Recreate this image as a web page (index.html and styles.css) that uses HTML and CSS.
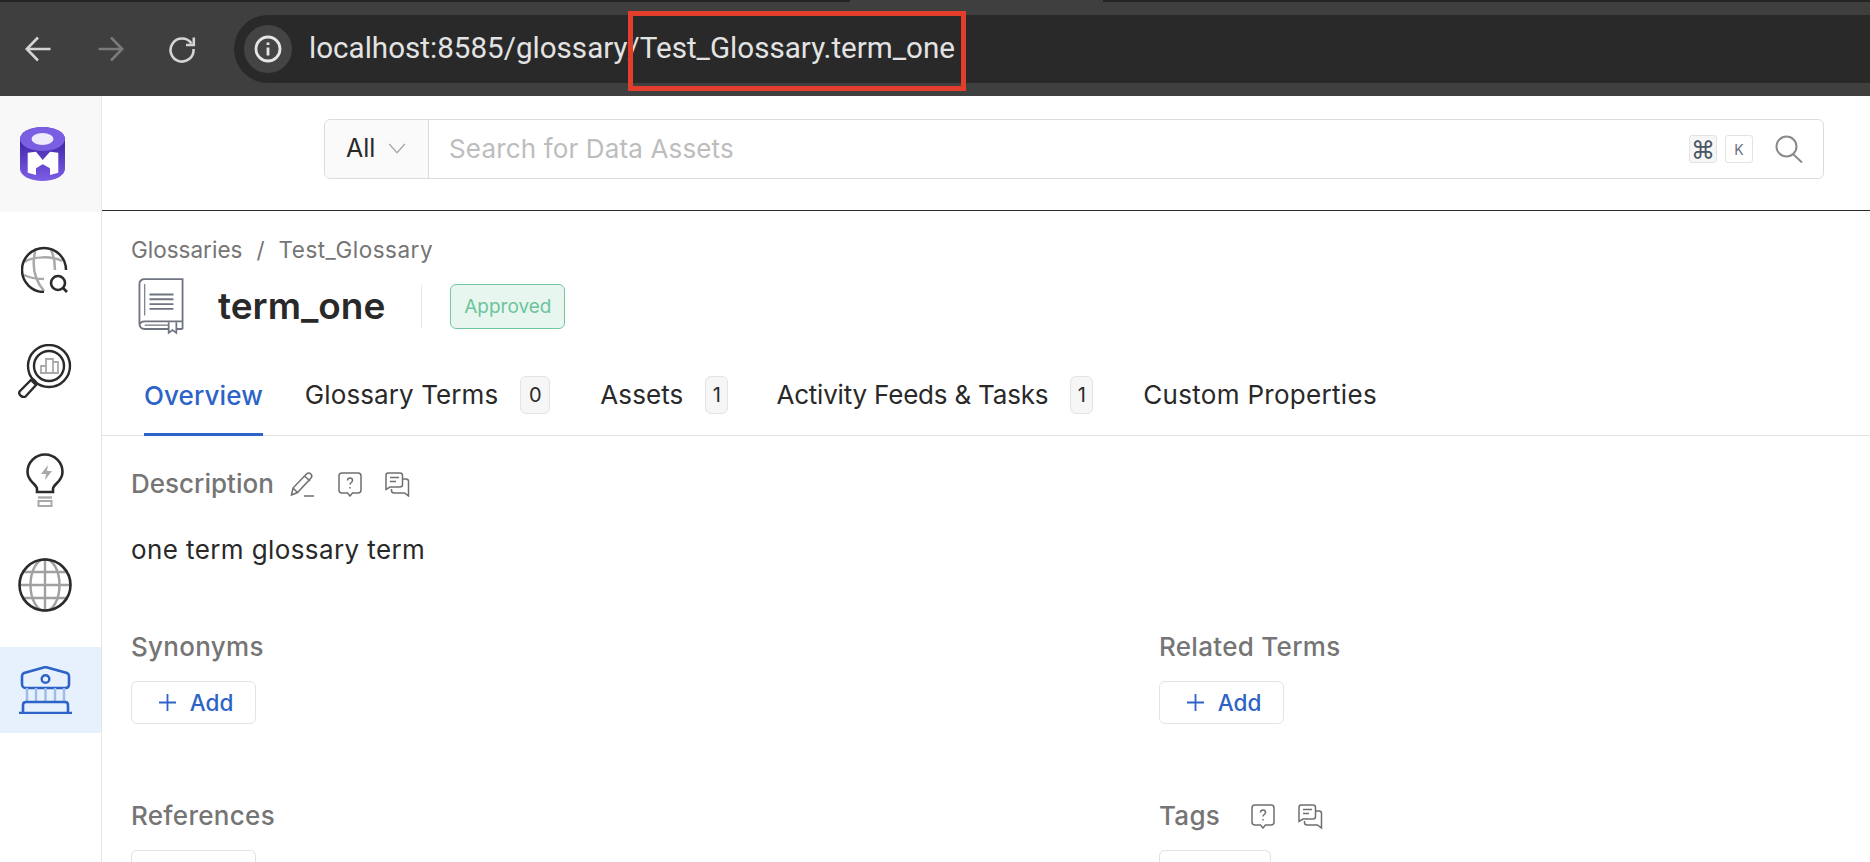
FILE: index.html
```html
<!DOCTYPE html>
<html lang="en">
<head>
<meta charset="utf-8">
<title>term_one</title>
<link rel="stylesheet" href="styles.css">
</head>
<body>
<header class="chrome">
  <div class="tabstrip"><span class="tab-a"></span><span class="tab-b"></span></div>
  <div class="toolbar">
    <svg class="nav n1" viewBox="0 0 30 30"><path d="M26.500 15H3.500M14 3.500L2.800 15 14 26.500"/></svg>
    <svg class="nav n2" viewBox="0 0 30 30"><path d="M3.500 15h23M16 3.500L27.200 15 16 26.500"/></svg>
    <svg class="nav n3" viewBox="0 0 30 30"><path d="M24.500 9.500A11.500 11.500 0 1 0 26.500 15"/><path d="M26.800 3.500V11H19"/></svg>
    <div class="omnibox">
      <span class="info"><svg viewBox="0 0 28 28"><circle cx="14" cy="14" r="12"/><path d="M14 12.500v8M14 7.500v2.500"/></svg></span>
      <span class="url">localhost:8585/glossary/Test_Glossary.term_one</span>
      <span class="highlight"></span>
    </div>
  </div>
</header>
<div class="app">
  <aside class="sidebar">
    <div class="logo">
      <svg viewBox="0 0 45 54" width="45" height="54">
        <defs><linearGradient id="logoBody" x1="0" y1="0" x2="0" y2="1"><stop offset="0.3" stop-color="#4429ad"/><stop offset="1" stop-color="#7d5fe6"/></linearGradient></defs>
        <path d="M0 12a22.500 12 0 0 1 45 0v30a22.500 12 0 0 1-45 0z" fill="url(#logoBody)"/>
        <ellipse cx="22.500" cy="12" rx="22.500" ry="12" fill="#7b5fe3"/>
        <ellipse cx="22.500" cy="12" rx="11" ry="6" fill="#efebfc"/>
        <path d="M7.700 25.700L16 24.700 22.700 33 30 24.700l8.300 1v20L30 48v-6.700l-7.300-4-6.700 4V48l-8.300-2.300z" fill="#fff"/>
      </svg>
    </div>
    <nav class="side-nav">
      <a class="side-item">
        <svg viewBox="0 0 48 48" width="48" height="48" fill="none">
          <path d="M15 3C11 17 12 33 23 46M30 5c3 6 4 13 4 20M3 17c10-6 28-6 38-1M3 30c6 3 14 4 20 4" stroke="#a9a9a9" stroke-width="2.500"/>
          <path d="M45 25A22 22 0 1 0 23 47" stroke="#2b2b2b" stroke-width="2.500"/>
          <circle cx="37" cy="38" r="7" stroke="#2b2b2b" stroke-width="2.600"/><path d="M42 43l4 4" stroke="#2b2b2b" stroke-width="2.600"/>
        </svg>
      </a>
      <a class="side-item lift">
        <svg viewBox="0 0 54 54" width="54" height="54" fill="none">
          <circle cx="31" cy="22" r="21" stroke="#2b2b2b" stroke-width="2.400"/><circle cx="31" cy="22" r="15" stroke="#2b2b2b" stroke-width="2.400"/>
          <path d="M23 29v-7h5v7M28 29V15h7v14M35 29v-11h5v11M22 29h19" stroke="#a9a9a9" stroke-width="1.800"/>
          <path d="M15 35l3 3M13 36l5 5-10 11c-3 3-9-2-6-5z" stroke="#2b2b2b" stroke-width="2.400"/>
        </svg>
      </a>
      <a class="side-item">
        <svg viewBox="0 0 38 54" width="38" height="54" fill="none">
          <path d="M11 39v-3c0-5-9.500-7-9.500-17a17.500 17.500 0 0 1 35 0c0 10-9.500 12-9.500 17v3z" stroke="#2b2b2b" stroke-width="2.600"/>
          <path d="M22 12l-7 9h5l-1 6 7-9h-5z" fill="#a9a9a9"/>
          <path d="M12 44.500h14" stroke="#a9a9a9" stroke-width="2.400"/>
          <rect x="12.500" y="48" width="13" height="5" stroke="#a9a9a9" stroke-width="2"/>
        </svg>
      </a>
      <a class="side-item">
        <svg viewBox="0 0 54 54" width="54" height="54" fill="none">
          <path d="M27 1v52M1 27h52M4 14h46M4 40h46" stroke="#a0a0a0" stroke-width="2.400"/>
          <ellipse cx="27" cy="27" rx="14.500" ry="26" stroke="#a0a0a0" stroke-width="2.400"/>
          <circle cx="27" cy="27" r="25.500" stroke="#2b2b2b" stroke-width="2.600"/>
        </svg>
      </a>
      <a class="side-item active">
        <svg viewBox="0 0 54 48" width="54" height="48" fill="none">
          <path d="M5 7L26.500 1 48 7c1 .5 2 1.500 2 3v8c0 2.500-1.500 4-3.500 4h-40C4.500 22 3 20.500 3 18v-8c0-1.500 1-2.500 2-3z" stroke="#2d63c7" stroke-width="2.600"/>
          <circle cx="26.500" cy="13" r="3.800" stroke="#2d63c7" stroke-width="2.400"/>
          <path d="M8 22v14M17 22v14M26.500 22v14M36 22v14M45 22v14" stroke="#9dbcec" stroke-width="2.400"/>
          <path d="M4 47v-8c0-2 1-3 3-3h39c2 0 3 1 3 3v8M0 47h53" stroke="#2d63c7" stroke-width="2.600"/>
        </svg>
      </a>
    </nav>
  </aside>
  <main class="content">
    <div class="topbar">
      <div class="search">
        <div class="scope"><span>All</span><svg viewBox="0 0 20 12" width="19" height="11"><path d="M1 1l8.500 9.500L18 1"/></svg></div>
        <div class="search-input">Search for Data Assets</div>
        <span class="key cmd">⌘</span>
        <span class="key">K</span>
        <svg class="magnifier" viewBox="0 0 28 28" width="28" height="28"><circle cx="11.500" cy="11.500" r="10"/><path d="M18.500 19.500l8.500 8"/></svg>
      </div>
    </div>
    <div class="page">
      <div class="crumbs"><span>Glossaries</span><span>/</span><span class="crumb-last">Test_Glossary</span></div>
      <div class="title-row">
        <svg class="book" viewBox="0 0 48 58" width="46" height="58" fill="none">
          <path d="M46.500 53V1H7C3.500 1 1.500 3 1.500 6v41c0 3.500 2 6 5.500 6h25M40 53h6.500M46.500 45H7c-3 0-5.500 2-5.500 4" stroke="#6f7480" stroke-width="1.900"/>
          <path d="M12 17h25M12 22h25M12 27h25M12 32h25" stroke="#6f7480" stroke-width="2"/>
          <path d="M7 6v33M7 49h25" stroke="#6f7480" stroke-width="1.200"/>
          <path d="M32 46v11l4-3 4 3V46" stroke="#6f7480" stroke-width="1.800"/>
        </svg>
        <h1>term_one</h1>
        <span class="rule"></span>
        <span class="status">Approved</span>
      </div>
      <div class="tabs">
        <a class="tab on">Overview</a>
        <a class="tab counted">Glossary Terms<b class="wide">0</b></a>
        <a class="tab counted">Assets<b>1</b></a>
        <a class="tab counted activity">Activity Feeds &amp; Tasks<b>1</b></a>
        <a class="tab custom">Custom Properties</a>
      </div>
      <section class="description">
        <div class="label-row">
          <h2 class="flush">Description</h2>
          <svg class="ico pencil" viewBox="0 0 26 26"><path d="M2.500 24l1.500-7L17.500 3c1.300-1.300 3-1.300 4.300 0s1.300 3 0 4.300L8.500 21.500zM15.500 5l5.500 5M4 17l4.500 4.500M15 25h10"/></svg>
          <svg class="ico help" viewBox="0 0 26 26"><path d="M5 2h16c2 0 3 1 3 3v14c0 2-1 3-3 3h-5.500L13 25l-2.500-3H5c-2 0-3-1-3-3V5c0-2 1-3 3-3zM10.500 9.500c0-3.300 5-3.300 5 0 0 2-2.500 2-2.500 4M13 16v1.500"/></svg>
          <svg class="ico comments" viewBox="0 0 26 26"><path d="M4 2h12c1.500 0 2.500 1 2.500 2.500v9c0 1.500-1 2.500-2.500 2.500H6l-4 2.500v-14C2 3 2.500 2 4 2zM6 6.500h9M6 10.500h6M18.500 8H22c1.500 0 2.500 1 2.500 2.500V25l-4-3H10c-1.500 0-2.500-1-2.500-2.500V18"/></svg>
        </div>
        <p>one term glossary term</p>
      </section>
      <div class="grid">
        <section class="field">
          <h2>Synonyms</h2>
          <button class="add"><svg viewBox="0 0 17 17" width="17" height="17"><path d="M8.500 0v17M0 8.500h17"/></svg>Add</button>
        </section>
        <section class="field">
          <h2>Related Terms</h2>
          <button class="add"><svg viewBox="0 0 17 17" width="17" height="17"><path d="M8.500 0v17M0 8.500h17"/></svg>Add</button>
        </section>
        <section class="field">
          <h2>References</h2>
          <button class="add stub"></button>
        </section>
        <section class="field">
          <div class="label-row">
            <h2>Tags</h2>
            <svg class="ico tag-help" viewBox="0 0 26 26"><path d="M5 2h16c2 0 3 1 3 3v14c0 2-1 3-3 3h-5.500L13 25l-2.500-3H5c-2 0-3-1-3-3V5c0-2 1-3 3-3zM10.500 9.500c0-3.300 5-3.300 5 0 0 2-2.500 2-2.500 4M13 16v1.500"/></svg>
            <svg class="ico comments" viewBox="0 0 26 26"><path d="M4 2h12c1.500 0 2.500 1 2.500 2.500v9c0 1.500-1 2.500-2.500 2.500H6l-4 2.500v-14C2 3 2.500 2 4 2zM6 6.500h9M6 10.500h6M18.500 8H22c1.500 0 2.500 1 2.500 2.500V25l-4-3H10c-1.500 0-2.500-1-2.500-2.500V18"/></svg>
          </div>
          <button class="add stub small"></button>
        </section>
      </div>
    </div>
  </main>
</div>
</body>
</html>
```
FILE: styles.css
```css
* { box-sizing: border-box; }
html, body { margin: 0; height: 862px; overflow: hidden; background: #fff; }
body { font-family: "Inter", "Noto Sans", sans-serif; color: #292929; }
h1, h2, p { margin: 0; font-weight: 400; }

.chrome { height: 96px; background: #3f3f3f; display: flex; flex-direction: column; }
.tabstrip { height: 2px; background: #3f3f3f; display: flex; flex: none; }
.tab-a { width: 850px; background: #242424; }
.tab-b { flex: 1; margin-left: 253px; background: #242424; }
.toolbar { flex: 1; display: flex; align-items: center; padding-left: 24px; }
.nav { width: 30px; height: 30px; flex: none; fill: none; stroke: #d4d4d4; stroke-width: 2.600; }
.n1 { margin-right: 41px; }
.n2 { margin-right: 42px; stroke: #7a7a7a; }
.n3 { margin-right: 37px; }
.omnibox { position: relative; flex: 1; height: 68px; background: #292929; border-radius: 34px 0 0 34px; display: flex; align-items: center; padding-left: 10px; }
.info { width: 48px; height: 48px; border-radius: 24px; background: #444; display: flex; align-items: center; justify-content: center; }
.info svg { width: 28px; height: 28px; fill: none; stroke: #e6e6e6; stroke-width: 2.800; }
.url { margin-left: 17px; padding-bottom: 2px; font: 400 29.600px "Roboto", sans-serif; color: #e3e3e3; white-space: nowrap; }
.highlight { position: absolute; left: 394px; top: -4px; width: 338px; height: 80px; border: 5px solid #e33d2b; }

.app { display: flex; height: 766px; overflow: hidden; }
.sidebar { width: 102px; flex: none; border-right: 1px solid #e6e6e6; display: flex; flex-direction: column; }
.logo { height: 116px; background: #f8f8f8; display: flex; align-items: center; justify-content: center; padding-right: 16px; }
.side-nav { display: flex; flex-direction: column; gap: 19.250px; padding-top: 14px; }
.side-item { height: 86px; display: flex; align-items: center; justify-content: center; padding-right: 11px; }
.side-item.lift svg { margin-bottom: 6px; }
.side-item.active { background: #e6f1fd; padding-right: 9px; }

.content { flex: 1; min-width: 0; }
.topbar { height: 115px; border-bottom: 1px solid #292929; padding: 23px 46px 0 222px; }
.search { height: 60px; border: 1px solid #dcdcdc; border-radius: 6px; display: flex; align-items: center; padding-right: 20px; }
.scope { width: 104px; height: 100%; background: #fafafa; border-right: 1px solid #dcdcdc; border-radius: 6px 0 0 6px; display: flex; align-items: center; gap: 13px; padding: 0 0 2px 21px; font-size: 25px; }
.scope svg { fill: none; stroke: #a9a9a9; stroke-width: 1.500; }
.search-input { flex: 1; padding: 0 0 2px 20px; font-size: 26px; letter-spacing: .15px; color: #bdbdbd; }
.key { width: 28px; height: 28px; border: 1px solid #e3e3e3; border-radius: 3px; display: flex; align-items: center; justify-content: center; font-size: 14px; color: #6b7280; margin-right: 8px; }
.key.cmd { font-size: 24px; background: #f6f6f6; color: #4b5563; }
.magnifier { margin-left: 14px; fill: none; stroke: #8a8a8a; stroke-width: 2; }

.page { padding-left: 29px; }
.crumbs { display: flex; align-items: center; gap: 14px; padding-top: 10px; height: 66px; font-size: 22.500px; color: #757575; }
.crumb-last { letter-spacing: .5px; }
.title-row { display: flex; align-items: center; height: 58px; padding-left: 7px; }
.title-row h1 { margin-left: 34px; padding-bottom: 1px; font-size: 37px; font-weight: 600; }
.rule { width: 1px; height: 43px; background: #e8e8e8; margin-left: 36px; }
.status { margin-left: 28px; width: 115px; height: 45px; border: 1px solid #72c9a1; border-radius: 6px; background: #e7f6ef; color: #6ec49b; font-size: 19px; display: flex; align-items: center; justify-content: center; }
.tabs { display: flex; height: 101px; margin-left: -29px; padding: 19px 0 0 42px; border-bottom: 1px solid #e3e3e3; }
.tab { display: flex; align-items: center; margin-right: 42px; font-size: 26px; letter-spacing: .1px; white-space: nowrap; }
.tab.counted { margin-right: 50px; }
.tab.activity { letter-spacing: -.2px; margin-left: -2px; }
.tab.custom { letter-spacing: .3px; }
.tab.on { color: #2d63c7; font-weight: 500; border-bottom: 3px solid #2d63c7; padding-top: 3px; margin-bottom: -1px; }
.tab b { margin-left: 22px; font-weight: 400; font-size: 20px; width: 23px; height: 38px; border: 1px solid #e3e3e3; border-radius: 6px; background: #f6f6f6; display: flex; align-items: center; justify-content: center; }
.tab b.wide { width: 30px; }

.label-row { display: flex; align-items: center; height: 34px; }
h2 { font-size: 26px; font-weight: 500; letter-spacing: .3px; line-height: 34px; color: #757575; white-space: nowrap; }
h2.flush { letter-spacing: 0; }
.ico { width: 26px; height: 26px; flex: none; fill: none; stroke: #6f6f6f; stroke-width: 1.500; }
.pencil { margin-left: 15px; }
.help { margin-left: 22px; }
.comments { margin-left: 21px; }
.tag-help { margin-left: 30px; }
.description { padding-top: 31px; }
.description p { margin-top: 32px; font-size: 26px; letter-spacing: .4px; line-height: 34px; }
.grid { display: grid; grid-template-columns: 1028px 1fr; margin-top: 63px; grid-auto-rows: 169px; }
.add { display: flex; align-items: center; justify-content: center; gap: 14px; margin-top: 17px; width: 125px; height: 43px; border: 1px solid #e3e3e3; border-radius: 6px; background: #fff; color: #2d63c7; font: 500 22.500px "Inter", sans-serif; padding: 0 0 0 5px; }
.add svg { fill: none; stroke: #2d63c7; stroke-width: 1.800; }
.add.stub { height: 12px; border-bottom: 0; border-radius: 6px 6px 0 0; }
.add.small { width: 112px; }
```
